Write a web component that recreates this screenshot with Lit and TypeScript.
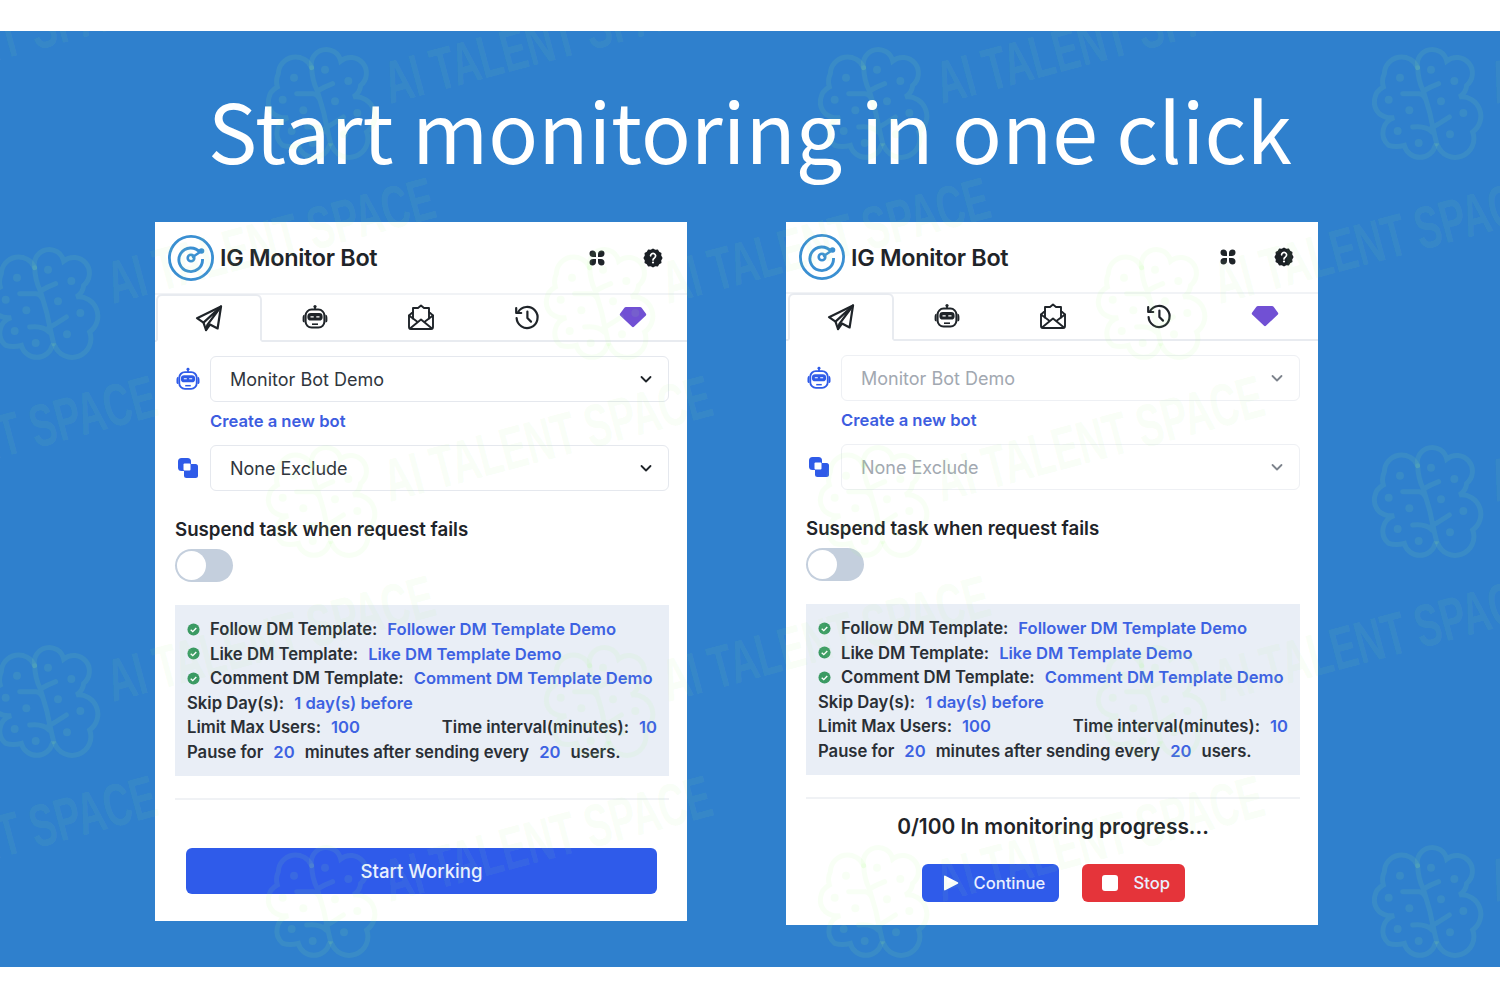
import { LitElement, html, css, svg } from "lit";
import { customElement, property } from "lit/decorators.js";

const robot = (c: string) => html`<svg viewBox="0 0 28 28" width="28" height="28" fill="none">
  <circle cx="14" cy="3.5" r="1.6" fill="${c}"/><path d="M14 4v3" stroke="${c}" stroke-width="1.8"/>
  <rect x="4.6" y="6.6" width="18.8" height="18" rx="6" stroke="${c}" stroke-width="2"/>
  <rect x="6.4" y="10" width="15.2" height="7.600" rx="3.400" fill="${c}"/>
  <path d="M9.500 13.800h3.200M15.300 13.800h3.200" stroke="#fff" stroke-width="1.200"/>
  <path d="M11 21.200h6" stroke="${c}" stroke-width="1.600"/>
  <path d="M3.600 11.500c-1.400.3-2 1.500-2 3.500v2.500c0 1.200.6 2 2 2zM24.400 11.500c1.400.3 2 1.500 2 3.500v2.500c0 1.200-.6 2-2 2z" fill="${c}"/>
</svg>`;

const plane = html`<svg viewBox="0 0 28 28" width="28" height="28" fill="none" stroke="#1f2429" stroke-width="2.2" stroke-linejoin="round" stroke-linecap="round">
  <path d="M2 14.2 26 2.5 22.6 24.5 15 20.500 11 26 8.500 18.600Z"/><path d="M8.500 18.600 26 2.500 12.400 20.800 11 26"/></svg>`;
const mail = html`<svg viewBox="0 0 28 28" width="28" height="28" fill="none" stroke="#1f2429" stroke-width="1.900" stroke-linejoin="round" stroke-linecap="round">
  <path d="M2 12.500 6 9V5h5l3-2.500L17 5h5v4l4 3.500V24a2 2 0 0 1-2 2H4a2 2 0 0 1-2-2Z"/><path d="M6 9v6.500M22 9v6.500"/><path d="M2 12.500 10 18.500M26 12.500 18 18.500"/><path d="M3 25.500 14 16.500 25 25.500"/></svg>`;
const hist = html`<svg viewBox="0 0 28 28" width="28" height="28" fill="none" stroke="#1f2429" stroke-width="2.200" stroke-linecap="round" stroke-linejoin="round">
  <path d="M5 9.200A10.500 10.500 0 1 1 3.600 15"/><path d="M3.200 5v5h5" /><path d="M14.400 8.500V15l3.600 3.600"/></svg>`;
const gem = html`<svg viewBox="0 0 28 22" width="28" height="22"><path d="M7 1h14a2 2 0 0 1 1.600.8l4.400 6a1.400 1.400 0 0 1-.1 1.700L15.200 20.600a1.600 1.600 0 0 1-2.400 0L1.100 9.500A1.400 1.400 0 0 1 1 7.800l4.400-6A2 2 0 0 1 7 1Z" fill="#7150d4"/></svg>`;
const apps = html`<svg viewBox="0 0 18 18" width="18" height="18" fill="#1f2429"><path d="M4.500 1.500C6.500 1.500 8 2.800 8 5v3H5C2.800 8 1.500 6.500 1.500 4.500S2.500 1.500 4.500 1.500ZM13.500 1.500c2 0 3 1 3 3S15.200 8 13 8h-3V5c0-2.200 1.500-3.500 3.500-3.500ZM5 10h3v3c0 2.200-1.500 3.500-3.500 3.500s-3-1-3-3S2.800 10 5 10ZM10 10h3c2.200 0 3.500 1.500 3.500 3.500s-1 3-3 3S10 15.200 10 13Z"/></svg>`;
const help = html`<svg viewBox="0 0 20 20" width="20" height="20"><path d="M10 .4l2.300 1.300 2.600-.3 1.300 2.300 2.300 1.200-.3 2.600L19.600 10l-1.400 2.500.3 2.600-2.300 1.200-1.300 2.300-2.600-.3L10 19.600l-2.300-1.300-2.600.3-1.300-2.300-2.300-1.200.3-2.600L.4 10l1.400-2.500-.3-2.600 2.300-1.200 1.300-2.300 2.600.3Z" fill="#1a1f24"/><path d="M7.600 7.800a2.500 2.500 0 1 1 3.900 2.100c-1 .6-1.500 1-1.500 2" fill="none" stroke="#fff" stroke-width="1.700" stroke-linecap="round"/><circle cx="10" cy="14.500" r="1.100" fill="#fff"/></svg>`;
const logo = html`<svg viewBox="0 0 46 46" width="46" height="46" fill="none" stroke="#3a8fd2">
  <circle cx="23" cy="23" r="21.600" stroke-width="2.800"/><path d="M32 17.500A11.800 11.800 0 1 0 34.500 24" stroke-width="2.900"/>
  <circle cx="23" cy="23" r="3.300" stroke-width="2.600"/><path d="M24 22.500 35 15" stroke-width="2.400"/><circle cx="33.500" cy="16" r="2.800" fill="#3a8fd2" stroke="none"/></svg>`;
const overlap = html`<svg viewBox="0 0 22 22" width="22" height="22"><rect x="1" y="1" width="13" height="13" rx="3.500" fill="#2f5be8"/><rect x="7" y="7" width="14" height="14" rx="2.500" fill="#2f5be8"/><rect x="6.500" y="6.500" width="7" height="7" rx="1" fill="#fff"/></svg>`;
const check = html`<svg viewBox="0 0 14 14" width="13" height="13"><circle cx="7" cy="7" r="6.500" fill="#3b9a63"/><path d="M4 7.200 6.200 9.300 10 5.300" stroke="#fff" stroke-width="1.500" fill="none"/></svg>`;
const chev = html`<svg viewBox="0 0 14 14" width="14" height="14" fill="none" stroke-width="1.800" stroke-linecap="round" stroke-linejoin="round"><path d="M2.500 5 7 9.500 11.500 5"/></svg>`;

@customElement("ig-card")
class IgCard extends LitElement {
  @property({ type: Boolean }) running = false;
  static styles = css`
    :host { display: block; width: 532px; background: #fff; color: #1f2429; font-family: Inter, "Liberation Sans", sans-serif; }
    .head { height: 71px; display: flex; align-items: center; padding: 0 24px 0 13px; border-bottom: 2px solid #f1f3f6; box-sizing: content-box; }
    .running .head { height: 70px; }
    .brand { margin-left: 6px; font-size: 23.400px; font-weight: 600; letter-spacing: -0.3px; flex: 1; }
    .headicons { display: flex; gap: 37px; align-items: center; }
    .tabs { display: flex; height: 46px; padding-left: 1px; border-bottom: 2px solid #e8ebf0; box-sizing: content-box; margin-top: -1px; }
    .running .tabs { padding-left: 2px; }
    .tab { width: 106px; display: flex; align-items: center; justify-content: center; box-sizing: border-box; }
    .tab.on { border: 2px solid #e8ebf0; border-bottom: 2px solid #fff; border-radius: 6px 6px 0 0; height: 48px; width: 106px; background: #fff; }
    .body { padding: 14px 18px 0 20px; }
    .row { display: flex; align-items: center; gap: 9px; }
    .ricon { width: 26px; display: flex; justify-content: center; flex: none; }
    .sel { flex: 1; height: 46px; box-sizing: border-box; border: 1.500px solid #e5e8ee; border-radius: 6px; display: flex; align-items: center; justify-content: space-between; padding: 0 15px 0 19px; font-size: 18px; color: #30363d; }
    .sel svg { stroke: #1f2429; }
    .running .sel { color: #a2a8b1; border-color: #eef0f4; }
    .running .sel svg { stroke: #7d838c; }
    .new { margin: 9px 0 14px 35px; font-size: 16.600px; font-weight: 600; color: #3d5de0; line-height: 20px; }
    .label { margin-top: 28px; font-size: 18.700px; font-weight: 600; line-height: 22px; }
    .toggle { margin-top: 8px; width: 58px; height: 33px; border-radius: 17px; background: #c4cfdd; box-sizing: border-box; padding: 2px; }
    .toggle i { display: block; width: 29px; height: 29px; border-radius: 50%; background: #fff; }
    .panel { margin-top: 23px; background: #e9eef6; height: 171px; box-sizing: border-box; padding: 12px 12px 0; font-size: 16.650px; font-weight: 600; line-height: 24.600px; color: #2a2f35; }
    .line { display: flex; align-items: center; white-space: pre; }
    .line svg { margin-right: 10px; flex: none; }
    .line b { font-weight: 600; font-size: 16.600px; color: #3d62e2; margin-left: 10px; }
    .line span.m { margin-left: 10px; }
    .sp { flex: 1; }
    hr { border: 0; border-top: 2px solid #f0f2f5; margin: 22px 0 0; }
    .foot { height: 121px; padding: 48px 30px 0 31px; box-sizing: border-box; }
    .start { height: 46px; border-radius: 6px; background: #2f5bea; color: #eaf0ff; font-size: 18.600px; font-weight: 500; display: flex; align-items: center; justify-content: center; }
    .rfoot { height: 126px; padding-left: 2px; display: flex; flex-direction: column; align-items: center; box-sizing: border-box; }
    .prog { margin-top: 15px; font-size: 20.900px; font-weight: 600; line-height: 26px; }
    .btns { margin-top: 24px; display: flex; gap: 23px; }
    .btn { height: 38px; border-radius: 6px; color: #e9efff; font-size: 16.600px; font-weight: 500; display: flex; align-items: center; box-sizing: border-box; }
    .cont { width: 137px; background: #2f5bea; padding-left: 21px; gap: 15px; }
    .stop { width: 103px; background: #e5343a; padding-left: 20px; gap: 16px; }
    .sq { width: 16px; height: 16px; border-radius: 3px; background: #fff; }
  `;
  render() {
    const r = this.running;
    return html`<div class=${r ? "running" : ""}>
      <div class="head">${logo}<div class="brand">IG Monitor Bot</div><div class="headicons">${apps}${help}</div></div>
      <div class="tabs">
        <div class="tab on">${plane}</div><div class="tab">${robot("#1f2429")}</div><div class="tab">${mail}</div><div class="tab">${hist}</div><div class="tab">${gem}</div>
      </div>
      <div class="body">
        <div class="row"><div class="ricon">${robot("#2f5be8")}</div><div class="sel">Monitor Bot Demo ${chev}</div></div>
        <div class="new">Create a new bot</div>
        <div class="row"><div class="ricon">${overlap}</div><div class="sel">None Exclude ${chev}</div></div>
        <div class="label">Suspend task when request fails</div>
        <div class="toggle"><i></i></div>
        <div class="panel">
          <div class="line">${check}Follow DM Template:<b>Follower DM Template Demo</b></div>
          <div class="line">${check}Like DM Template:<b>Like DM Template Demo</b></div>
          <div class="line">${check}Comment DM Template:<b>Comment DM Template Demo</b></div>
          <div class="line">Skip Day(s):<b>1 day(s) before</b></div>
          <div class="line">Limit Max Users:<b>100</b><span class="sp"></span>Time interval(minutes):<b>10</b></div>
          <div class="line">Pause for<b>20</b><span class="m">minutes after sending every</span><b>20</b><span class="m">users.</span></div>
        </div>
        <hr />
      </div>
      ${r
        ? html`<div class="rfoot"><div class="prog">0/100 In monitoring progress...</div>
            <div class="btns">
              <div class="btn cont"><svg viewBox="0 0 16 16" width="16" height="16"><path d="M1 1.500c0-.8.700-1.200 1.300-.8l12.500 6.500c.6.400.6 1.200 0 1.600L2.300 15.300c-.6.400-1.300 0-1.300-.8Z" fill="#fff"/></svg>Continue</div>
              <div class="btn stop"><div class="sq"></div>Stop</div>
            </div></div>`
        : html`<div class="foot"><div class="start">Start Working</div></div>`}
    </div>`;
  }
}

const brain = (x: number, y: number) => svg`<g transform="translate(${x} ${y}) scale(.3333) translate(-200 -230)">
  <g fill="none" stroke-width="15" stroke-linecap="round">
    <path d="M175 112A44 44 0 0 1 262 92A46 46 0 0 1 322 165Q320 188 300 200A58 58 0 0 1 340 305A56 56 0 0 1 235 345"/>
    <path d="M175 112A52 52 0 0 0 75 130Q66 150 72 170A50 50 0 0 0 60 250Q80 265 105 262A48 48 0 0 0 88 345Q110 352 135 345A48 48 0 0 0 228 345"/>
    <path d="M175 112Q176 150 192 182Q205 225 212 250Q220 290 232 340M192 182Q212 170 238 160M130 190H180Q198 192 205 225M214 295Q240 280 270 260M160 290Q200 285 218 305"/>
  </g>
  <g stroke="none">
    ${[[122, 142], [215, 118], [285, 152], [88, 208], [245, 213], [150, 240], [312, 248], [115, 302], [272, 312], [178, 338]].map(([a, b]) => svg`<circle cx="${a}" cy="${b}" r="12"/>`)}
  </g></g>`;

@customElement("app-root")
class AppRoot extends LitElement {
  static styles = css`
    :host { display: block; background: #fff; height: 1000px; padding-top: 31px; box-sizing: border-box; }
    .banner { position: relative; overflow: hidden; height: 936px; background: #2f80cd; padding-left: 155px; box-sizing: border-box; }
    .title { height: 191px; margin-left: -155px; text-align: center; color: #fff; font-family: "Noto Sans CJK SC", "Noto Sans", sans-serif; font-size: 82.400px; font-weight: 400; line-height: 194px; white-space: nowrap; }
    .cards { display: flex; gap: 99px; align-items: flex-start; }
    .wm { position: absolute; left: 0; top: 0; pointer-events: none; }
    .wm text { font-family: "Liberation Sans", sans-serif; font-weight: 700; font-size: 60px; }
  `;
  render() {
    const pts: [number, number][] = [];
    [107, 505, 905].forEach((y) => [-235, 320, 872, 1426].forEach((x) => pts.push([x, y])));
    [307, 705].forEach((y) => [43, 598, 1150].forEach((x) => pts.push([x, y])));
    return html`<div class="banner">
      <div class="title">Start monitoring in one click</div>
      <div class="cards"><ig-card></ig-card><ig-card running></ig-card></div>
      <svg class="wm" width="1500" height="936" viewBox="0 31 1500 936" stroke="#aafa8c" stroke-opacity=".085" fill="#aafa8c" fill-opacity=".085">
        ${pts.map(([x, y]) => svg`${brain(x, y)}<text x="${x + 70}" y="${y - 3}" stroke="none" textLength="337" lengthAdjust="spacingAndGlyphs" transform="rotate(-15 ${x + 70} ${y - 3})">AI TALENT SPACE</text>`)}
      </svg>
    </div>`;
  }
}
